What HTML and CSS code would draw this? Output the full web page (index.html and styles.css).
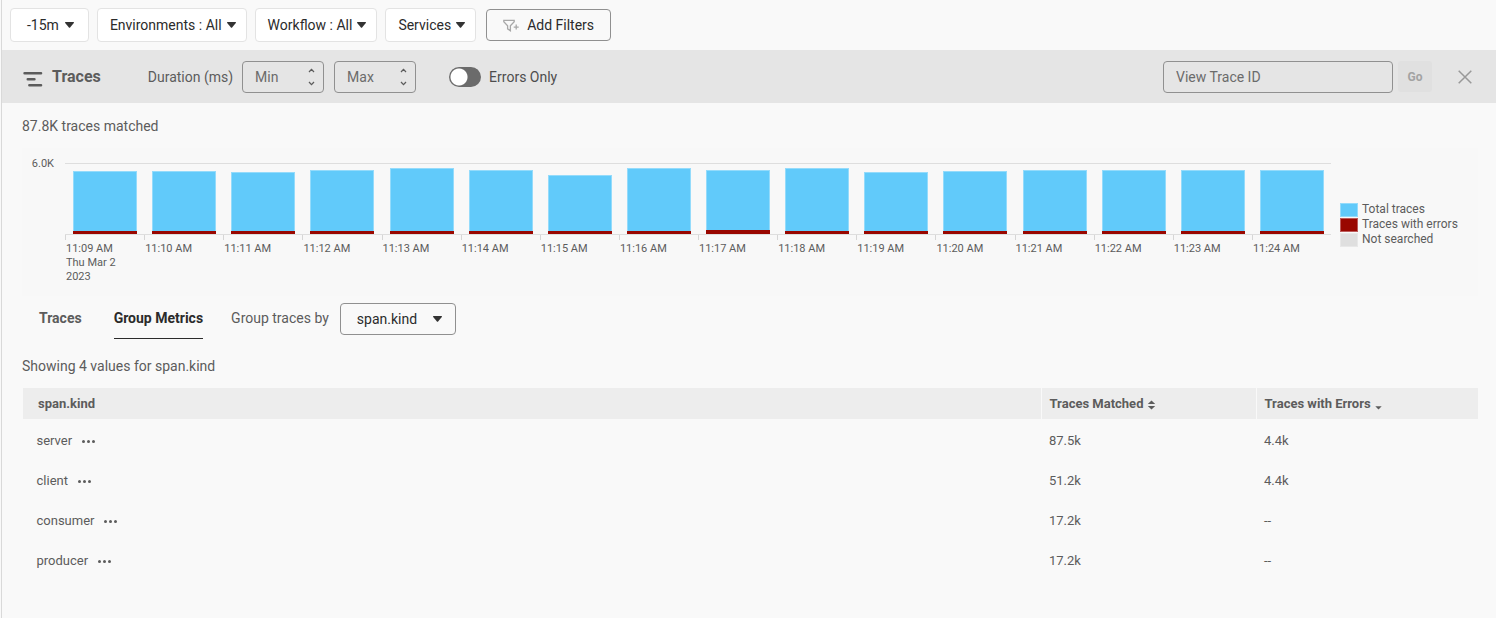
FILE: index.html
```html
<!DOCTYPE html>
<html lang="en">
<head>
<meta charset="utf-8">
<title>Traces</title>
<link rel="stylesheet" href="styles.css">
</head>
<body>
<div class="page">
  <nav class="filters" aria-label="Filters">
    <button class="filter filter-time" type="button">-15m <svg class="caret" viewBox="0 0 9 6" aria-hidden="true"><path d="M0.6 0h7.8c.5 0 .7.5.4.9L5.1 5.5a.8.8 0 0 1-1.2 0L.2.9C-.1.5.1 0 .6 0z"/></svg></button>
    <button class="filter" type="button">Environments : All <svg class="caret" viewBox="0 0 9 6" aria-hidden="true"><path d="M0.6 0h7.8c.5 0 .7.5.4.9L5.1 5.5a.8.8 0 0 1-1.2 0L.2.9C-.1.5.1 0 .6 0z"/></svg></button>
    <button class="filter" type="button">Workflow : All <svg class="caret" viewBox="0 0 9 6" aria-hidden="true"><path d="M0.6 0h7.8c.5 0 .7.5.4.9L5.1 5.5a.8.8 0 0 1-1.2 0L.2.9C-.1.5.1 0 .6 0z"/></svg></button>
    <button class="filter" type="button">Services <svg class="caret" viewBox="0 0 9 6" aria-hidden="true"><path d="M0.6 0h7.8c.5 0 .7.5.4.9L5.1 5.5a.8.8 0 0 1-1.2 0L.2.9C-.1.5.1 0 .6 0z"/></svg></button>
    <button class="add-filters" type="button"><svg class="funnel" viewBox="0 0 16 13" aria-hidden="true"><path d="M.8 1.3h10.4v1.4L7.4 6.8v5L4.6 9.8v-3L.8 2.7zM13.2 5.6v5M10.7 8.1h5"/></svg>Add Filters</button>
  </nav>

  <header class="toolbar">
    <svg class="trace-icon" viewBox="0 0 20 20" aria-hidden="true"><path d="M1.6 6.2h16.4M4.8 12.2h6.6M6.4 18.2h11.6"/></svg>
    <h1 class="title">Traces</h1>
    <span class="duration-label">Duration (ms)</span>
    <div class="stepper">
      <input class="stepper-input" type="number" placeholder="Min" aria-label="Minimum duration (ms)">
      <span class="stepper-buttons">
        <button class="step" type="button" aria-label="Increase minimum"><svg viewBox="0 0 7 5" aria-hidden="true"><path d="M1 4l2.5-2.6L6 4"/></svg></button>
        <button class="step" type="button" aria-label="Decrease minimum"><svg viewBox="0 0 7 5" aria-hidden="true"><path d="M1 1l2.5 2.6L6 1"/></svg></button>
      </span>
    </div>
    <div class="stepper">
      <input class="stepper-input" type="number" placeholder="Max" aria-label="Maximum duration (ms)">
      <span class="stepper-buttons">
        <button class="step" type="button" aria-label="Increase maximum"><svg viewBox="0 0 7 5" aria-hidden="true"><path d="M1 4l2.5-2.6L6 4"/></svg></button>
        <button class="step" type="button" aria-label="Decrease maximum"><svg viewBox="0 0 7 5" aria-hidden="true"><path d="M1 1l2.5 2.6L6 1"/></svg></button>
      </span>
    </div>
    <label class="switch"><input class="switch-input" type="checkbox">Errors Only</label>
    <form class="lookup">
      <input class="trace-id" type="text" placeholder="View Trace ID" aria-label="View Trace ID">
      <button class="go" type="button" disabled>Go</button>
      <button class="close" type="button" aria-label="Close"><svg viewBox="0 0 14 14" aria-hidden="true"><path d="M.7.7l12.6 12.6M13.3.7L.7 13.3"/></svg></button>
    </form>
  </header>

  <main class="content">
    <p class="summary">87.8K traces matched</p>

    <section class="chart" aria-label="Traces over time">
      <span class="y-label">6.0K</span>
      <div class="plot" id="plot"></div>
      <ul class="legend">
        <li class="legend-item"><span class="swatch swatch-total"></span>Total traces</li>
        <li class="legend-item"><span class="swatch swatch-errors"></span>Traces with errors</li>
        <li class="legend-item"><span class="swatch swatch-none"></span>Not searched</li>
      </ul>
    </section>

    <div class="tabs">
      <button class="tab" type="button">Traces</button>
      <button class="tab tab-active" type="button">Group Metrics</button>
      <label class="group-label" for="group">Group traces by</label>
      <div class="group-select">
        <select class="group-field" id="group"><option>span.kind</option></select>
        <svg class="caret group-caret" viewBox="0 0 9 6" aria-hidden="true"><path d="M0.6 0h7.8c.5 0 .7.5.4.9L5.1 5.5a.8.8 0 0 1-1.2 0L.2.9C-.1.5.1 0 .6 0z"/></svg>
      </div>
    </div>

    <p class="showing">Showing 4 values for span.kind</p>

    <table class="metrics">
      <colgroup><col><col class="col-matched"><col class="col-errors"></colgroup>
      <thead>
        <tr>
          <th scope="col">span.kind</th>
          <th scope="col">Traces Matched <svg class="sort" viewBox="0 0 9 10" aria-hidden="true"><path d="M4.5 0.4L8.2 4H.8zM4.5 9.6L8.2 6H.8z"/></svg></th>
          <th scope="col">Traces with Errors <svg class="sort" viewBox="0 0 9 10" aria-hidden="true"><path d="M4.5 9.6L7.7 6.2H1.3z"/></svg></th>
        </tr>
      </thead>
      <tbody>
        <tr><td>server<button class="more" type="button" aria-label="server actions"><svg viewBox="0 0 13 3" aria-hidden="true"><path d="M1.5 1.5h0M6.5 1.5h0M11.5 1.5h0"/></svg></button></td><td>87.5k</td><td>4.4k</td></tr>
        <tr><td>client<button class="more" type="button" aria-label="client actions"><svg viewBox="0 0 13 3" aria-hidden="true"><path d="M1.5 1.5h0M6.5 1.5h0M11.5 1.5h0"/></svg></button></td><td>51.2k</td><td>4.4k</td></tr>
        <tr><td>consumer<button class="more" type="button" aria-label="consumer actions"><svg viewBox="0 0 13 3" aria-hidden="true"><path d="M1.5 1.5h0M6.5 1.5h0M11.5 1.5h0"/></svg></button></td><td>17.2k</td><td>--</td></tr>
        <tr><td>producer<button class="more" type="button" aria-label="producer actions"><svg viewBox="0 0 13 3" aria-hidden="true"><path d="M1.5 1.5h0M6.5 1.5h0M11.5 1.5h0"/></svg></button></td><td>17.2k</td><td>--</td></tr>
      </tbody>
    </table>
  </main>
</div>
<script src="chart.js"></script>
</body>
</html>
```

FILE: chart.js
```js
// Traces per minute, as a percentage of the axis maximum (6.0K).
const minutes = [
  { total: 90, errors: 4 }, { total: 90, errors: 4 }, { total: 88, errors: 4 }, { total: 91, errors: 4 },
  { total: 94, errors: 4 }, { total: 92, errors: 4 }, { total: 85, errors: 4 }, { total: 94, errors: 4 },
  { total: 92, errors: 6 }, { total: 94, errors: 4 }, { total: 88, errors: 4 }, { total: 90, errors: 4 },
  { total: 92, errors: 4 }, { total: 92, errors: 4 }, { total: 92, errors: 4 }, { total: 92, errors: 4 },
];

const plot = document.getElementById("plot");
minutes.forEach((minute, index) => {
  const column = document.createElement("div");
  column.className = "column";
  const date = index === 0 ? "<br>Thu Mar 2<br>2023" : "";
  const time = "11:" + String(9 + index).padStart(2, "0") + " AM";
  column.innerHTML =
    '<div class="bar-area"><div class="bar" style="height:' + minute.total + '%">' +
    '<div class="bar-errors" style="height:' + minute.errors + '%"></div></div></div>' +
    '<div class="tick">' + time + date + "</div>";
  plot.append(column);
});
```

FILE: styles.css
```css
* { box-sizing: border-box; }

body {
  margin: 0;
  background: #f9f9f9;
  color: #5c5c5c;
  font: 14px/20px Roboto, "Liberation Sans", sans-serif;
}

button, input, select { font: inherit; color: inherit; margin: 0; }
button { background: none; border: 0; padding: 0; cursor: pointer; }
svg { display: block; flex: none; overflow: visible; }
p { margin: 0; }

.page {
  min-height: 100vh;
  margin-left: 1px;
  border-left: 1px solid #d9d9d9;
}

.filters { display: flex; align-items: center; gap: 8px; padding: 8px; }
.filter {
  display: flex;
  align-items: center;
  gap: 5px;
  height: 34px;
  padding: 0 10px 0 12px;
  background: #fff;
  border: 1px solid #e3e3e3;
  border-radius: 4px;
  color: #2b2b2b;
}
.filter-time { gap: 6px; padding: 0 14px 0 16px; }
.caret { width: 9px; height: 6px; fill: #333; }
.add-filters {
  display: flex;
  align-items: center;
  gap: 8px;
  height: 32px;
  margin-left: 2px;
  padding: 0 16px;
  border: 1px solid #909090;
  border-radius: 4px;
  color: #2b2b2b;
}
.funnel { width: 16px; height: 13px; fill: none; stroke: #a8a8a8; stroke-width: 1.3; }

.toolbar {
  display: flex;
  align-items: center;
  min-height: 53px;
  padding: 0 24px 0 21px;
  background: #e5e5e5;
}
.trace-icon { width: 20px; height: 20px; fill: none; stroke: #5c5c5c; stroke-width: 2.6; stroke-linecap: round; }
.title { margin: 0 47px 0 9px; font-size: 16px; font-weight: 700; line-height: 20px; }
.duration-label { margin-right: 9px; }
.stepper {
  display: flex;
  width: 82px;
  height: 32px;
  margin-right: 10px;
  border: 1px solid #909090;
  border-radius: 4px;
}
.stepper-input {
  flex: 1;
  min-width: 0;
  padding: 0 0 0 12px;
  background: none;
  border: 0;
  appearance: textfield;
}
.stepper-input::-webkit-inner-spin-button { appearance: none; }
::placeholder { color: #6b6b6b; opacity: 1; }
.stepper-buttons { display: flex; flex-direction: column; justify-content: center; gap: 8px; width: 23px; }
.step { display: flex; justify-content: center; }
.step svg { width: 7px; height: 5px; fill: none; stroke: #5c5c5c; stroke-width: 1.3; }

.switch { display: flex; align-items: center; gap: 8px; margin-left: 23px; color: #4d4d4d; }
.switch-input {
  appearance: none;
  width: 32px;
  height: 20px;
  border-radius: 10px;
  background: radial-gradient(circle at 10px 10px, #fff 8px, #6b6b6b 9px);
}

.lookup { display: flex; align-items: center; margin-left: auto; }
.trace-id {
  width: 230px;
  height: 32px;
  padding: 0 12px;
  background: none;
  border: 1px solid #909090;
  border-radius: 4px;
}
.go {
  width: 34px;
  height: 31px;
  margin: 0 26px 0 5px;
  background: #e0e0e0;
  border-radius: 3px;
  color: #a3a3a3;
  font-size: 12px;
  font-weight: 700;
}
.close svg { width: 14px; height: 14px; fill: none; stroke: #999; stroke-width: 1.5; }

.content { padding: 13px 18px 0 20px; }

.chart {
  display: flex;
  min-height: 148px;
  margin-top: 12px;
  padding-top: 15px;
  background: #f8f8f8;
  font-size: 11px;
  line-height: 14px;
}
.y-label { width: 32px; margin: -6px 11px 0 0; text-align: right; }
.plot { display: flex; flex: 1; min-width: 0; }
.column { flex: 1; min-width: 0; }
.bar-area {
  display: flex;
  align-items: flex-end;
  justify-content: center;
  height: 72px;
  padding-left: 1px;
  border-top: 1px solid #dedede;
  border-bottom: 1px solid #dedede;
}
.bar {
  display: flex;
  align-items: flex-end;
  width: 82%;
  background: #61cafa;
  border: 1px solid #94dbfb;
  border-bottom: 0;
}
.bar-errors { flex: 1; min-height: 3px; margin: 0 -1px; background: #990700; }
.tick {
  padding: 7px 0 0 1px;
  white-space: nowrap;
  background: linear-gradient(#d6d6d6, #d6d6d6) 0 0 / 1px 5px no-repeat;
}
.legend {
  width: 147px;
  margin: 0;
  padding: 39px 0 0 9px;
  list-style: none;
  font-size: 12px;
  line-height: 15px;
}
.legend-item { display: flex; align-items: center; gap: 4px; }
.swatch { width: 18px; height: 14px; border: 1px solid transparent; }
.swatch-total { background: #61cafa; border-color: #94dbfb; }
.swatch-errors { background: #990700; border-color: #bd5b5b; }
.swatch-none { background: #dfdfdf; border-color: #e8e8e8; }

.tabs { display: flex; align-items: center; margin-top: 3px; padding-left: 17px; height: 40px; }
.tab { height: 40px; margin-right: 32px; padding-bottom: 2px; border-bottom: 1px solid transparent; font-weight: 700; }
.tab-active { margin-right: 28px; border-color: #2b2b2b; color: #2b2b2b; }
.group-label { margin-right: 11px; padding-bottom: 2px; }
.group-select { display: grid; width: 116px; align-items: center; }
.group-field, .group-caret { grid-area: 1 / 1; }
.group-field {
  appearance: none;
  height: 32px;
  padding: 0 16px;
  background: none;
  border: 1px solid #909090;
  border-radius: 4px;
  color: #2b2b2b;
}
.group-caret { justify-self: end; margin-right: 14px; pointer-events: none; }

.showing { margin-top: 17px; }

.metrics {
  width: 100%;
  margin-top: 12px;
  border-collapse: collapse;
  table-layout: fixed;
  font-size: 13px;
}
.col-matched { width: 215px; }
.col-errors { width: 222px; }
.metrics th { height: 31px; padding: 1px 8px 0; background: #ededed; border-left: 1px solid #f9f9f9; text-align: left; font-weight: 700; }
.metrics th:first-child { padding-left: 15px; }
.metrics td { height: 40px; padding: 3px 8px 0; }
.metrics td:first-child { padding-left: 14px; }
.sort { display: inline-block; width: 9px; height: 10px; fill: #5c5c5c; vertical-align: -2px; }
.more { margin-left: 10px; vertical-align: middle; }
.more svg { width: 13px; height: 3px; fill: none; stroke: #5c5c5c; stroke-width: 3; stroke-linecap: round; }
```
